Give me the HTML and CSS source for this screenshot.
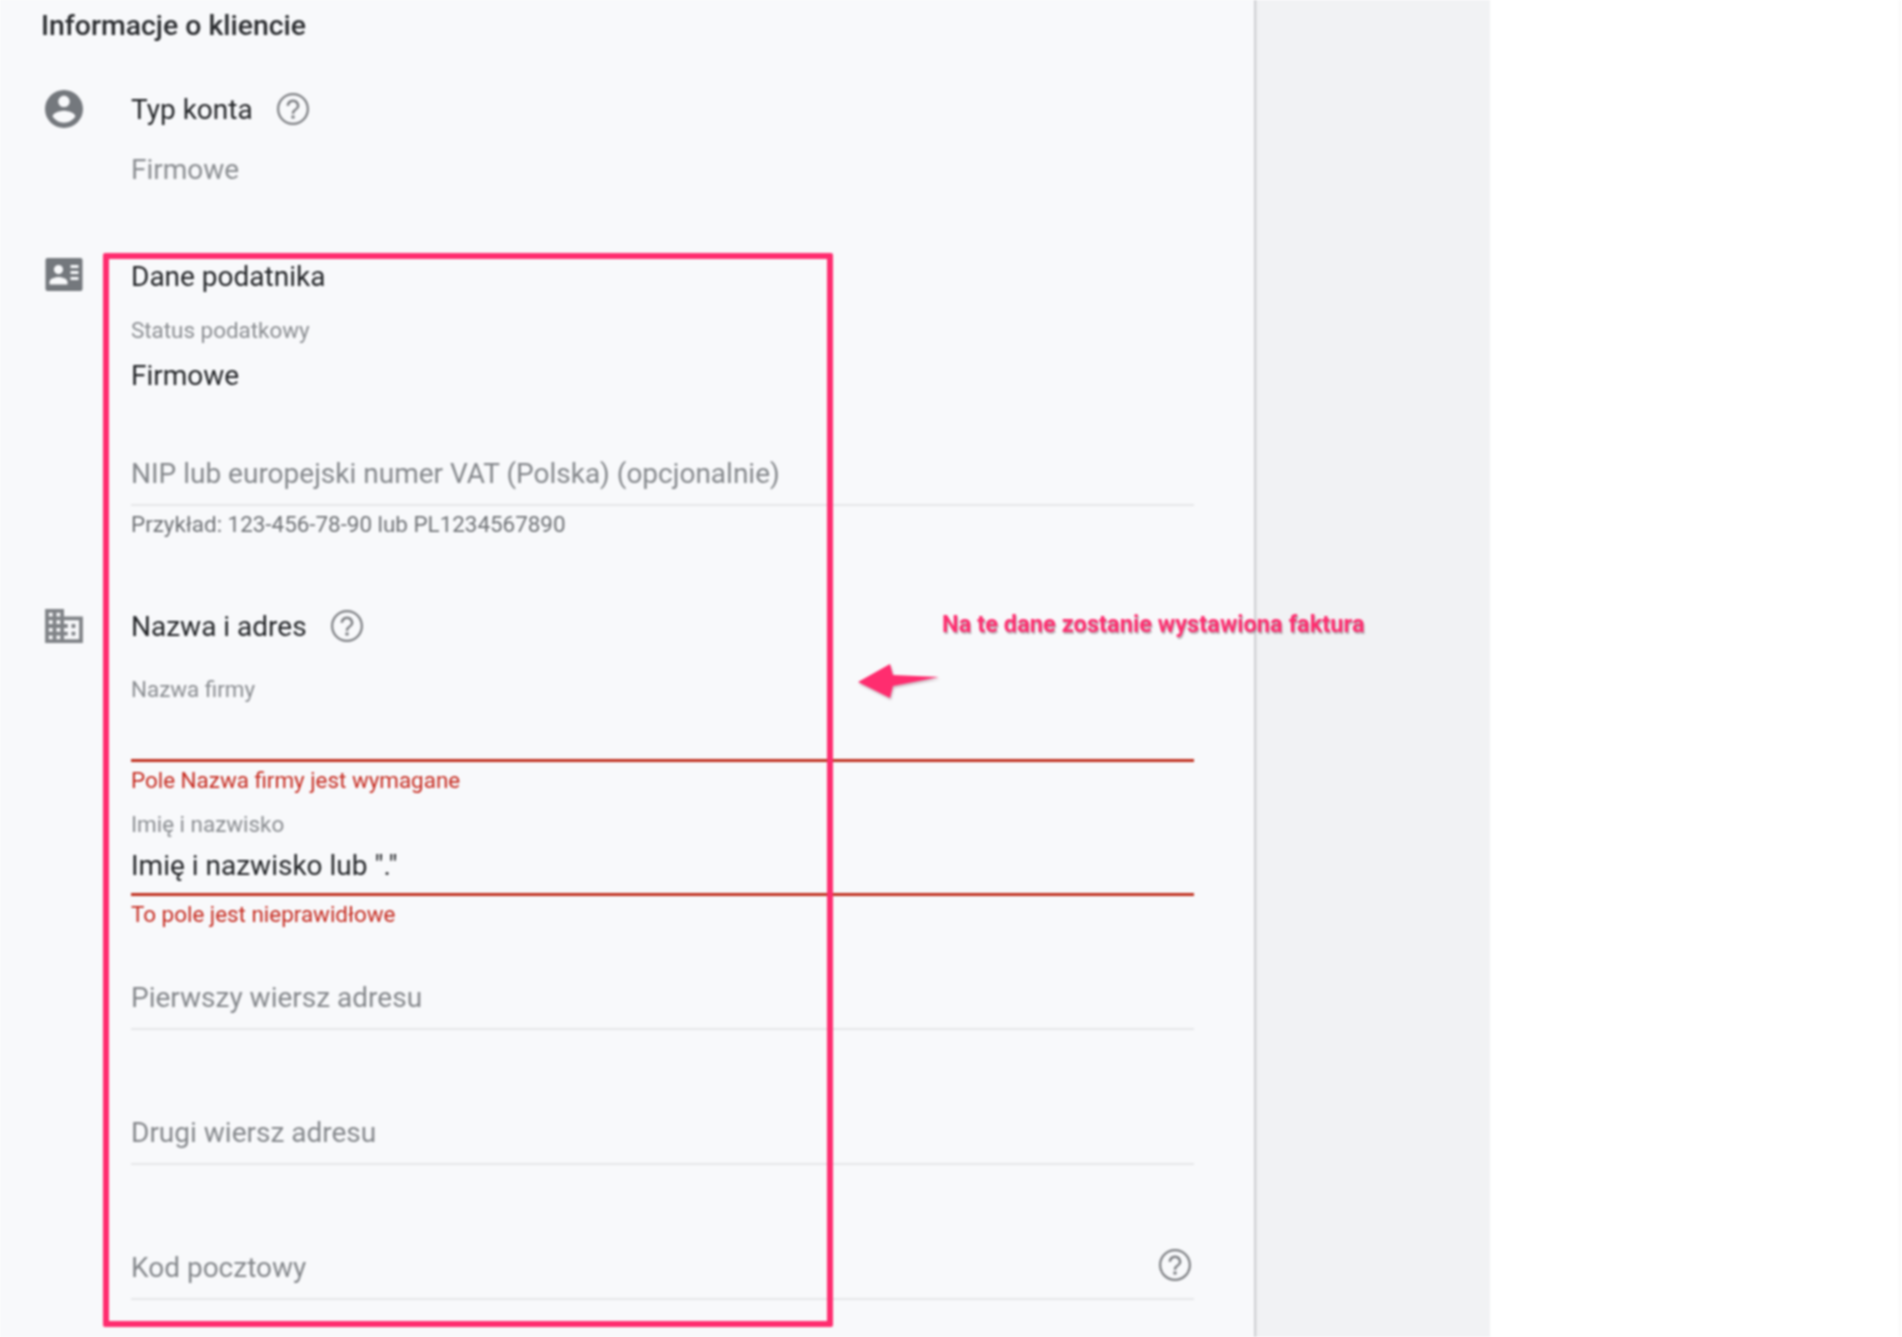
FILE: index.html
```html
<!DOCTYPE html>
<html lang="pl">
<head>
<meta charset="utf-8">
<title>Informacje o kliencie</title>
<link rel="stylesheet" href="styles.css">
</head>
<body>
<svg class="defs" width="0" height="0" aria-hidden="true">
  <symbol id="help" viewBox="2 2 20 20"><path d="M11 18h2v-2h-2v2zm1-16C6.48 2 2 6.48 2 12s4.48 10 10 10 10-4.48 10-10S17.52 2 12 2zm0 18.6c-4.74 0-8.6-3.86-8.6-8.6S7.26 3.4 12 3.4s8.6 3.86 8.6 8.6-3.86 8.6-8.6 8.6zM12 6c-2.21 0-4 1.79-4 4h1.6c0-1.32 1.08-2.4 2.4-2.4s2.4 1.08 2.4 2.4c0 2.2-3.2 2-3.2 5h1.6c0-2.2 3.2-2.5 3.2-5 0-2.21-1.79-4-4-4z"/></symbol>
</svg>
<div class="page">
  <main class="panel">
    <h1 class="title">Informacje o kliencie</h1>

    <section class="group group-account">
      <svg class="icon" viewBox="2 2 20 20"><path d="M12 2C6.48 2 2 6.48 2 12s4.48 10 10 10 10-4.48 10-10S17.52 2 12 2zm0 3c1.66 0 3 1.34 3 3s-1.34 3-3 3-3-1.34-3-3 1.34-3 3-3zm0 14.2c-2.5 0-4.71-1.28-6-3.22.03-1.99 4-3.08 6-3.08 1.99 0 5.97 1.09 6 3.08-1.29 1.94-3.5 3.22-6 3.22z"/></svg>
      <div class="group-body">
        <div class="heading"><span>Typ konta</span><svg class="help"><use href="#help"/></svg></div>
        <div class="value muted account-value">Firmowe</div>
      </div>
    </section>

    <section class="group group-tax">
      <svg class="icon icon-card" viewBox="0 0 37 33"><path fill-rule="evenodd" d="M2 0h33a2 2 0 0 1 2 2v29a2 2 0 0 1-2 2H2a2 2 0 0 1-2-2V2a2 2 0 0 1 2-2zm11 7a4.600 4.600 0 1 0 0 9.200 4.600 4.600 0 0 0 0-9.200zM4 26.500h18v-2.500c0-3.600-6-5-9-5s-9 1.400-9 5zM25 7v3h8V7zm0 6v3h8v-3zm0 6v3h8v-3z"/></svg>
      <div class="group-body">
        <div class="heading">Dane podatnika</div>
        <div class="label status-label">Status podatkowy</div>
        <div class="value status-value">Firmowe</div>
        <div class="field nip-field">NIP lub europejski numer VAT (Polska) (opcjonalnie)</div>
        <div class="hint">Przykład: 123-456-78-90 lub PL1234567890</div>
      </div>
    </section>

    <section class="group group-address">
      <svg class="icon icon-domain" viewBox="2 3 20 18"><path d="M12 7V3H2v18h20V7H12zM6 19H4v-2h2v2zm0-4H4v-2h2v2zm0-4H4V9h2v2zm0-4H4V5h2v2zm4 12H8v-2h2v2zm0-4H8v-2h2v2zm0-4H8V9h2v2zm0-4H8V5h2v2zm10 12h-8v-2h2v-2h-2v-2h2v-2h-2V9h8v10zm-2-8h-2v2h2v-2zm0 4h-2v2h2v-2z"/></svg>
      <div class="group-body">
        <div class="heading"><span>Nazwa i adres</span><svg class="help help-wide"><use href="#help"/></svg></div>
        <div class="label company-label">Nazwa firmy</div>
        <div class="field field-error company-field"></div>
        <div class="error company-error">Pole Nazwa firmy jest wymagane</div>
        <div class="label name-label">Imię i nazwisko</div>
        <div class="field field-error field-filled name-field">Imię i nazwisko lub "."</div>
        <div class="error name-error">To pole jest nieprawidłowe</div>
        <div class="field line1-field">Pierwszy wiersz adresu</div>
        <div class="field line2-field">Drugi wiersz adresu</div>
        <div class="field postal-field"><span>Kod pocztowy</span><svg class="help"><use href="#help"/></svg></div>
      </div>
    </section>

    <div class="callout-box"></div>
    <svg class="callout-arrow" viewBox="0 0 81 34"><path d="M0 18L32 0l3 11 46 2-46 9-3 12z"/></svg>
    <p class="callout-text">Na te dane zostanie wystawiona faktura</p>
  </main>
  <aside class="aside"></aside>
  <div class="rest"></div>
</div>
</body>
</html>
```

FILE: styles.css
```css
* { box-sizing: border-box; }
html, body { margin: 0; height: 100%; overflow: hidden; background: #fff; }
body { font-family: Roboto, "Liberation Sans", sans-serif; color: #202124; }
.defs { position: absolute; }
.page { display: flex; height: 1337px; filter: blur(0.9px); }
.panel { position: relative; z-index: 1; flex: 0 0 1256px; height: 1337px; padding: 10px 0 0 45px; background: #f8f9fb; border-right: 2px solid #d0d1d4; box-shadow: 1px 0 2px rgba(0, 0, 0, .06); }
.aside { flex: 0 0 234px; background: #f1f2f4; }
.rest { flex: 1; background: #fff; border-right: 2px solid #f8f8f8; margin-right: 1px; }

.title { margin: 0 0 0 -4px; font-size: 28.400px; line-height: 32px; font-weight: 500; color: #2b2d30; }
.group { display: flex; align-items: flex-start; }
.group-account { margin-top: 52px; }
.group-tax { margin-top: 75px; }
.group-address { margin-top: 75px; }
.group-body { margin-left: 48px; width: 1063px; }

.icon { flex: 0 0 38px; width: 38px; height: 38px; margin-top: -4px; fill: #74787d; }
.icon-card { height: 33px; margin-top: -3px; }
.icon-domain { height: 34px; margin-top: -2px; fill: #808387; }

.heading { display: flex; align-items: center; height: 32px; font-size: 28px; line-height: 32px; color: #232528; }
.help { flex: none; width: 32px; height: 32px; margin: -2px 0 0 24px; fill: #7d7f83; }
.help-wide { margin-left: 24px; }

.value { font-size: 28px; line-height: 32px; color: #232528; }
.muted { color: #8a8d91; }
.account-value { margin-top: 28px; }
.label { font-size: 22.400px; line-height: 24px; color: #8a8d91; }
.status-label { margin-top: 25px; }
.status-value { margin-top: 18px; }

.field { display: flex; justify-content: space-between; align-items: center; height: 48px; padding-bottom: 15px; font-size: 28px; line-height: 32px; color: #85888c; border-bottom: 2px solid #e6e7e9; }
.field .help { margin: -5px 3px 0 0; }
.nip-field { margin-top: 66px; }
.hint { margin-top: 6px; font-size: 22.400px; line-height: 24px; color: #6f7276; }

.field-error { height: 47px; padding-bottom: 13px; border-bottom: 3px solid #c0301f; }
.field-filled { height: 46px; padding-bottom: 12px; color: #232528; }
.error { margin-top: 7px; font-size: 22.400px; line-height: 24px; color: #c62a1f; }
.company-error { margin-top: 6px; }
.name-error { margin-top: 6px; }

.company-label { margin-top: 34px; }
.company-field { height: 61px; }
.name-label { margin-top: 20px; }
.name-field { margin-top: 14px; }
.line1-field { margin-top: 56px; }
.line2-field { margin-top: 87px; }
.postal-field { margin-top: 87px; }

.callout-box { position: absolute; left: 103px; top: 253px; width: 730px; height: 1074px; border: 6px solid #ff2d6f; border-radius: 2px; }
.callout-arrow { position: absolute; left: 858px; top: 664px; width: 81px; height: 34px; fill: #ff2d6f; filter: drop-shadow(1px 2px 1px rgba(120, 60, 80, .35)); }
.callout-text { position: absolute; left: 942px; top: 610px; margin: 0; font-size: 23.650px; line-height: 28px; font-weight: 700; color: #ff2d6f; white-space: nowrap; text-shadow: 1px 2px 1px rgba(90, 70, 80, .4); }
```
